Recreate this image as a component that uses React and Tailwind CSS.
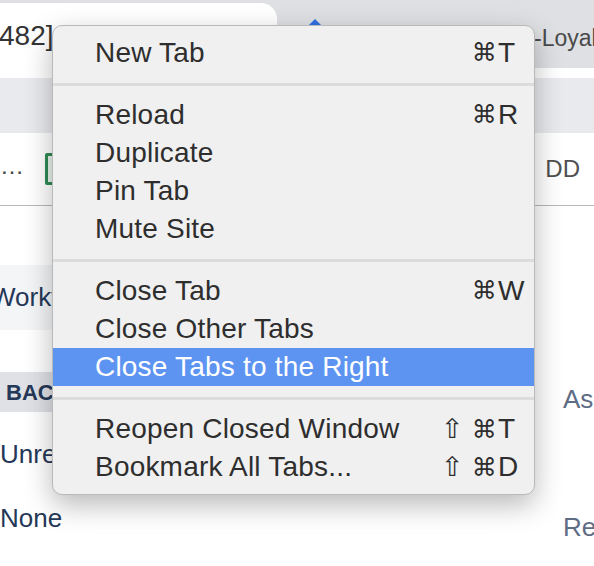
import React from 'react';

const font = { fontFamily: '"Liberation Sans", Arial, "DejaVu Sans", sans-serif' };

const groups = [
  [{ label: 'New Tab', mod: '⌘', key: 'T' }],
  [
    { label: 'Reload', mod: '⌘', key: 'R' },
    { label: 'Duplicate' },
    { label: 'Pin Tab' },
    { label: 'Mute Site' },
  ],
  [
    { label: 'Close Tab', mod: '⌘', key: 'W' },
    { label: 'Close Other Tabs' },
    { label: 'Close Tabs to the Right', active: true },
  ],
  [
    { label: 'Reopen Closed Window', shift: true, mod: '⌘', key: 'T' },
    { label: 'Bookmark All Tabs...', shift: true, mod: '⌘', key: 'D' },
  ],
];

const MenuItem = ({ item }) => (
  <div
    className={`flex items-center h-[38px] pl-[42px] text-[28px] leading-[38px] tracking-[0.2px] ${
      item.active ? 'bg-[#5d94f2] text-white' : 'text-[#2e2e2e]'
    }`}
  >
    <span className="flex-1 whitespace-nowrap">{item.label}</span>
    {item.mod ? (
      <>
        <span
          className="w-[70px] text-right whitespace-nowrap text-[25px]"
          style={{ fontFamily: '"DejaVu Sans", sans-serif' }}
        >
          {item.shift && <span className="mr-[8px] text-[27px]">⇧</span>}
          {item.mod}
        </span>
        <span className="w-[37px] pl-[1px] text-left">{item.key}</span>
      </>
    ) : (
      <span className="w-[107px]" />
    )}
  </div>
);

const ContextMenu = () => (
  <div className="absolute left-[52px] top-[25px] w-[483px] py-[8px] bg-[#f0f0f0] border border-[#b9b9b9] rounded-[10px] shadow-[0_10px_28px_rgba(0,0,0,0.28)]">
    {groups.map((group, i) => (
      <div key={i}>
        {i > 0 && (
          <div className="h-[24px] flex items-center">
            <div className="w-full h-[3px] bg-[#dcdcdc]" />
          </div>
        )}
        {group.map((item) => (
          <MenuItem key={item.label} item={item} />
        ))}
      </div>
    ))}
  </div>
);

export default function App() {
  return (
    <div className="relative w-[594px] h-[566px] overflow-hidden bg-white" style={font}>
      {/* tab strip */}
      <div className="h-[68px] bg-[#dee0e4] flex">
        <div className="w-[277px] shrink-0 mt-[3px] bg-white rounded-tr-[16px] flex items-center text-[28px] text-[#333]">
          <span className="-ml-[1px]">482]</span>
        </div>
        <div className="relative flex-1">
          <div className="absolute left-[31px] top-[19px] w-0 h-0 border-l-[7px] border-r-[7px] border-b-[7px] border-l-transparent border-r-transparent border-b-[#2f6fe0]" />
          <span className="absolute left-[257px] top-[21px] text-[23px] text-[#4a4a4a] whitespace-nowrap">
            -Loyalty
          </span>
        </div>
      </div>
      <div className="h-[10px] bg-white" />
      <div className="h-[55px] bg-[#e9eaed]" />

      {/* issue row */}
      <div className="h-[73px] flex items-center border-b border-[#b8b8b8]">
        <span className="text-[24px] text-[#444] -mt-[6px] w-[45px]">…</span>
        <div className="w-[20px] h-[32px] border-[3px] border-[#2f8a55] bg-[#e8f4ec] rounded-[2px]" />
        <span className="ml-auto mr-[14px] text-[24px] text-[#505050]">DD</span>
      </div>

      {/* content */}
      <div className="flex">
        <div className="w-[560px] shrink-0 text-[#253858]">
          <div className="h-[59px]" />
          <div className="h-[65px] w-[520px] bg-[#f4f5f7] flex items-center text-[26px] whitespace-nowrap">
            <span className="-ml-[9px]">Workflow</span>
          </div>
          <div className="h-[42px]" />
          <div className="h-[40px] w-[60px] bg-[#dfe1e6] flex items-center text-[22px] font-bold pl-[6px]">
            BACKLOG
          </div>
          <div className="h-[64px] flex items-center text-[26px] pt-[20px]">Unresolved</div>
          <div className="h-[64px] flex items-center text-[26px] pt-[20px]">None</div>
        </div>
        <div className="flex-1 min-w-0 text-[26px] text-[#5e6c84] whitespace-nowrap">
          <div className="h-[174px]" />
          <div className="pl-[3px]">Assignee</div>
          <div className="h-[89px]" />
          <div className="pl-[3px]">Reporter</div>
        </div>
      </div>

      <ContextMenu />
    </div>
  );
}
